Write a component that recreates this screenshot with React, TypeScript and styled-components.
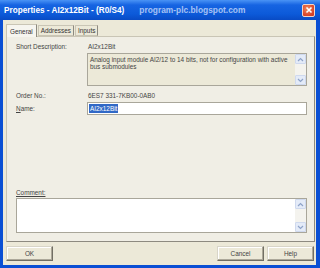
import React from "react";
import styled, { createGlobalStyle } from "styled-components";

const Global = createGlobalStyle`
  html, body { margin: 0; padding: 0; background: #ECE9D8; }
  body { font-family: "Liberation Sans", Arial, sans-serif; }
  * { box-sizing: border-box; }
`;

const Window = styled.div`
  width: 320px;
  height: 268px;
  display: flex;
  flex-direction: column;
  background: #0a4fd4;
  overflow: hidden;
`;

const TitleBar = styled.div`
  height: 20px;
  flex: none;
  display: flex;
  align-items: center;
  padding: 0 4px 0 4px;
  background: linear-gradient(#4a93f5 0%, #1664e2 25%, #0c5ad9 70%, #094bc4 100%);
  color: #fff;
  font-weight: bold;
  font-size: 8.2px;
`;

const Title = styled.span`
  white-space: nowrap;
`;

const Watermark = styled.span`
  margin-left: 15px;
  color: rgba(225, 235, 255, 0.72);
  font-size: 8.4px;
  white-space: nowrap;
`;

const Close = styled.div`
  margin-left: auto;
  width: 13px;
  height: 13px;
  border: 1px solid #f3d5c8;
  border-radius: 2px;
  background: radial-gradient(circle at 40% 35%, #f08a5c, #d9442a 70%, #c53a22);
  display: flex;
  align-items: center;
  justify-content: center;
  margin-right: 1px;
`;

const Frame = styled.div`
  flex: 1;
  margin: 0 4px 3px 3px;
  background: #ECE9D8;
  display: flex;
  flex-direction: column;
  padding: 3px 1px 4px 3px;
`;

const TabRow = styled.div`
  display: flex;
  align-items: flex-end;
  height: 13px;
  padding-left: 0;
`;

const Tab = styled.div<{ $active?: boolean }>`
  height: ${(p) => (p.$active ? 13 : 11)}px;
  padding: 0 ${(p) => (p.$active ? 3 : 2)}px;
  font-size: 6.4px;
  color: #333;
  display: flex;
  align-items: center;
  background: ${(p) => (p.$active ? "#f6f5ef" : "#ECE9D8")};
  border: 1px solid #c9c5b5;
  border-bottom: ${(p) => (p.$active ? "none" : "1px solid #c9c5b5")};
  border-right: 1px solid #8d8a80;
  margin-right: 1px;
  position: relative;
  top: ${(p) => (p.$active ? 1 : 0)}px;
`;

const Panel = styled.div`
  flex: 1;
  background: #f0eee5;
  border: 1px solid #c9c5b5;
  border-right: 1px solid #8d8a80;
  border-bottom: 1px solid #8d8a80;
  padding: 4px 7px 8px 9px;
  display: flex;
  flex-direction: column;
  font-size: 6.4px;
  color: #444;
`;

const Row = styled.div<{ $mt?: number }>`
  display: flex;
  align-items: center;
  margin-top: ${(p) => p.$mt ?? 0}px;
`;

const Label = styled.div`
  width: 71px;
  flex: none;
  white-space: nowrap;
`;

const Value = styled.div`
  padding-left: 1px;
  white-space: nowrap;
`;

const Box = styled.div<{ $bg: string; $h: number }>`
  flex: 1;
  height: ${(p) => p.$h}px;
  background: ${(p) => p.$bg};
  border: 1px solid #a9a69a;
  display: flex;
`;

const BoxText = styled.div`
  flex: 1;
  padding: 2px 2px;
  line-height: 7px;
  color: #444;
`;

const Scroll = styled.div`
  width: 11px;
  display: flex;
  flex-direction: column;
  justify-content: space-between;
  background: #f4f3ee;
`;

const Arrow = styled.div`
  width: 11px;
  height: 10px;
  background: #e4ebf8;
  border: 1px solid #cfd9ee;
  border-radius: 1px;
  display: flex;
  align-items: center;
  justify-content: center;
`;

const Input = styled.div`
  flex: 1;
  height: 13px;
  background: #fff;
  border: 1px solid #a9a69a;
  display: flex;
  align-items: center;
  padding-left: 1px;
`;

const Selected = styled.span`
  background: #3168c6;
  color: #fff;
  padding: 0 1px;
  line-height: 9px;
`;

const Spacer = styled.div`
  flex: 1;
`;

const CommentLabel = styled.div`
  margin-bottom: 2px;
  text-decoration: underline;
  text-decoration-thickness: 0.5px;
`;

const Buttons = styled.div`
  display: flex;
  align-items: center;
  margin-top: 4px;
  height: 15px;
  margin-right: 1px;
`;

const Button = styled.div<{ $ml?: number }>`
  width: 47px;
  height: 15px;
  margin-left: ${(p) => p.$ml ?? 0}px;
  background: #ECE9D8;
  border: 1px solid #d8d5c8;
  border-right-color: #716f64;
  border-bottom-color: #716f64;
  box-shadow: inset -1px -1px 0 #aca899, inset 1px 1px 0 #fff;
  font-size: 6.4px;
  color: #444;
  display: flex;
  align-items: center;
  justify-content: center;
`;

const U = styled.span`
  text-decoration: underline;
  text-decoration-thickness: 0.5px;
`;

const Chevron = ({ up }: { up?: boolean }) => (
  <svg width="7" height="5" viewBox="0 0 7 5">
    <path
      d={up ? "M1 4 L3.5 1.5 L6 4" : "M1 1 L3.5 3.5 L6 1"}
      fill="none"
      stroke="#8ea3c8"
      strokeWidth="1.2"
    />
  </svg>
);

export default function App() {
  return (
    <>
      <Global />
      <Window>
        <TitleBar>
          <Title>Properties - AI2x12Bit - (R0/S4)</Title>
          <Watermark>program-plc.blogspot.com</Watermark>
          <Close>
            <svg width="8" height="8" viewBox="0 0 8 8">
              <path d="M1.5 1.5 L6.5 6.5 M6.5 1.5 L1.5 6.5" stroke="#fff" strokeWidth="1.6" />
            </svg>
          </Close>
        </TitleBar>
        <Frame>
          <TabRow>
            <Tab $active>General</Tab>
            <Tab>Addresses</Tab>
            <Tab>Inputs</Tab>
          </TabRow>
          <Panel>
            <Row $mt={2}>
              <Label>Short Description:</Label>
              <Value>AI2x12Bit</Value>
            </Row>
            <Row $mt={3}>
              <Label />
              <Box $bg="#ECE9D8" $h={33}>
                <BoxText>
                  Analog input module AI2/12 to 14 bits, not for configuration with active bus submodules
                </BoxText>
                <Scroll>
                  <Arrow>
                    <Chevron up />
                  </Arrow>
                  <Arrow>
                    <Chevron />
                  </Arrow>
                </Scroll>
              </Box>
            </Row>
            <Row $mt={6}>
              <Label>Order No.:</Label>
              <Value>6ES7 331-7KB00-0AB0</Value>
            </Row>
            <Row $mt={3}>
              <Label>
                <U>N</U>ame:
              </Label>
              <Input>
                <Selected>AI2x12Bit</Selected>
              </Input>
            </Row>
            <Spacer />
            <CommentLabel>Comment:</CommentLabel>
            <Row>
              <Box $bg="#fff" $h={35}>
                <BoxText />
                <Scroll>
                  <Arrow>
                    <Chevron up />
                  </Arrow>
                  <Arrow>
                    <Chevron />
                  </Arrow>
                </Scroll>
              </Box>
            </Row>
          </Panel>
          <Buttons>
            <Button>OK</Button>
            <Spacer />
            <Button>Cancel</Button>
            <Button $ml={3}>Help</Button>
          </Buttons>
        </Frame>
      </Window>
    </>
  );
}
